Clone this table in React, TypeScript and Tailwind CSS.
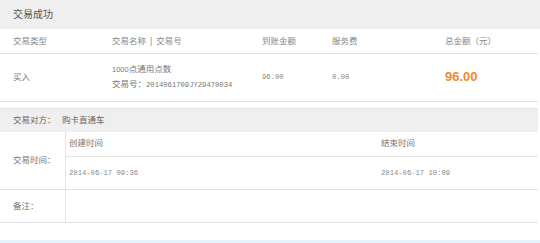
import React from "react";

const cjk = { fontFamily: '"Liberation Sans", "Noto Sans CJK SC", sans-serif' };
const mono = "font-['Liberation_Mono',monospace] text-[7.2px]";

export default function App() {
  return (
    <div className="w-[540px] h-[243px] bg-white text-[8.5px] text-[#777] flex flex-col" style={cjk}>
      {/* status band */}
      <div className="h-[29px] bg-[#efefef] flex items-center pl-[13px] text-[10px] text-[#555]">交易成功</div>

      <div className="w-[538px]">
        {/* order table head */}
        <div className="h-[25px] border-b border-[#e3e3e3] flex items-center pl-[13px] pt-[1px] text-[#888]">
          <div className="w-[99px]">交易类型</div>
          <div className="w-[150px]">
            交易名称<span className="mx-[4px]">|</span>交易号
          </div>
          <div className="w-[70px]">到账金额</div>
          <div className="w-[113px]">服务费</div>
          <div>总金额（元）</div>
        </div>

        {/* order row */}
        <div className="h-[48px] border-b border-[#e3e3e3] flex items-center pl-[13px]">
          <div className="w-[99px]">买入</div>
          <div className="w-[150px] flex flex-col gap-[2px] -mt-[1px]">
            <div>
              <span className="text-[7.5px]">1000</span>点通用点数
            </div>
            <div>
              交易号：<span className={mono}>2014061709JY29470034</span>
            </div>
          </div>
          <div className={`w-[70px] ${mono} text-[#888]`}>96.00</div>
          <div className={`w-[113px] ${mono} text-[#888]`}>0.00</div>
          <div className="font-['Liberation_Sans',sans-serif] font-bold text-[13px] text-[#ef8a2a] -mt-[1px]">96.00</div>
        </div>

        <div className="h-[6px]" />

        {/* detail table */}
        <div className="border-t border-[#e3e3e3]">
          <div className="h-[23px] bg-[#efefef] flex items-center pl-[13px] text-[#666]">
            <span className="w-[49px]">交易对方：</span>
            <span>购卡直通车</span>
          </div>

          <div className="flex border-b border-[#e3e3e3]">
            <div className="w-[66px] border-r border-[#e3e3e3] flex items-center pl-[13px]">交易时间：</div>
            <div className="flex-1">
              <div className="h-[25px] border-b border-[#e3e3e3] grid grid-cols-[312px_1fr] items-center pl-[3px] pb-[1px]">
                <span>创建时间</span>
                <span>结束时间</span>
              </div>
              <div className={`h-[32px] grid grid-cols-[312px_1fr] items-center pl-[3px] text-[#888] ${mono}`}>
                <span>2014-06-17 09:36</span>
                <span>2014-06-17 10:09</span>
              </div>
            </div>
          </div>

          <div className="flex h-[33px] border-b border-[#e3e3e3]">
            <div className="w-[66px] border-r border-[#e3e3e3] flex items-center pl-[13px]">备注：</div>
            <div className="flex-1" />
          </div>
        </div>
      </div>

      <div className="flex-1" />
      <div className="h-[3px] bg-[#e6f4fa]" />
    </div>
  );
}
